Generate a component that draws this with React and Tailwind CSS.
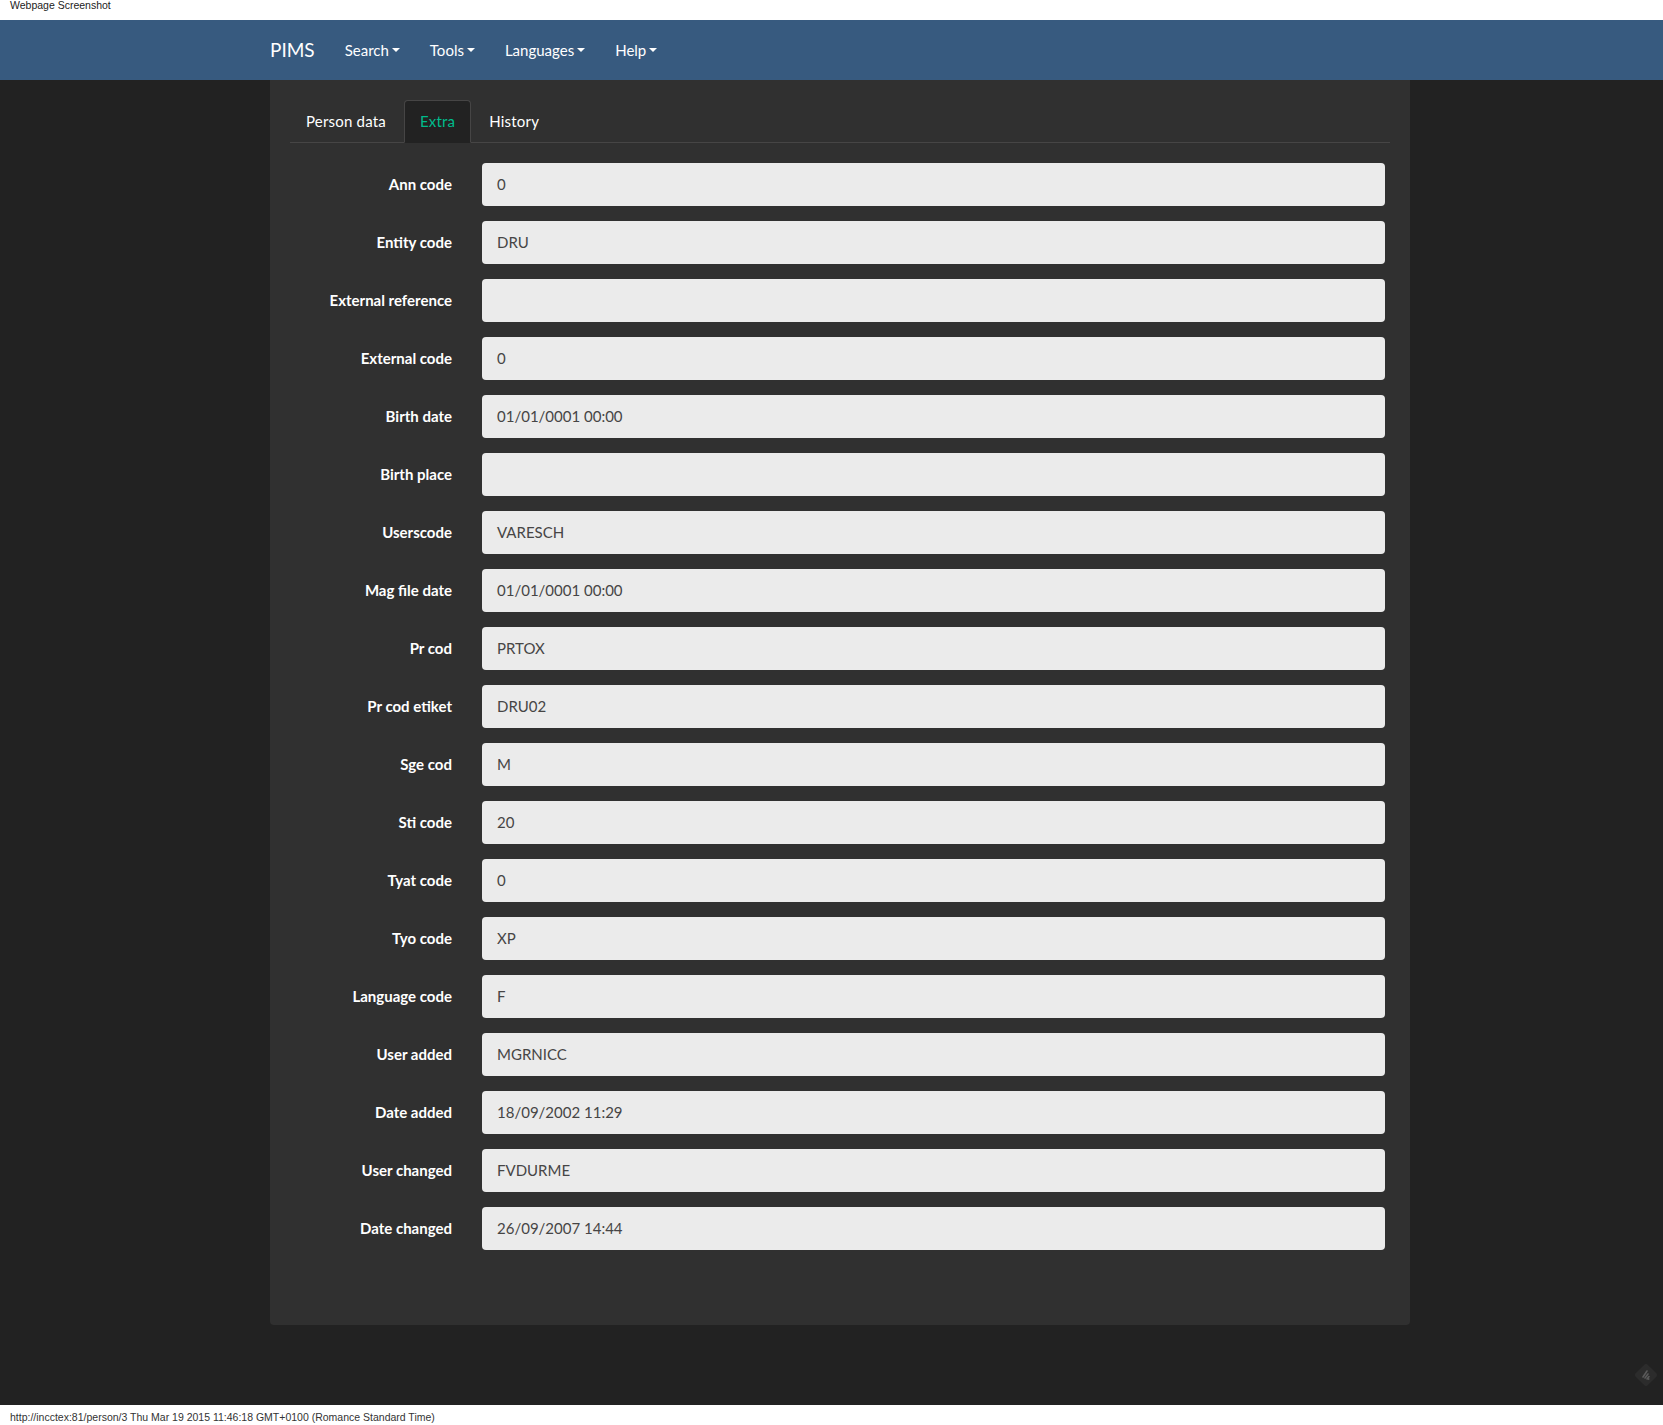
import React from "react";

const fields = [
  ["Ann code", "0"],
  ["Entity code", "DRU"],
  ["External reference", ""],
  ["External code", "0"],
  ["Birth date", "01/01/0001 00:00"],
  ["Birth place", ""],
  ["Userscode", "VARESCH"],
  ["Mag file date", "01/01/0001 00:00"],
  ["Pr cod", "PRTOX"],
  ["Pr cod etiket", "DRU02"],
  ["Sge cod", "M"],
  ["Sti code", "20"],
  ["Tyat code", "0"],
  ["Tyo code", "XP"],
  ["Language code", "F"],
  ["User added", "MGRNICC"],
  ["Date added", "18/09/2002 11:29"],
  ["User changed", "FVDURME"],
  ["Date changed", "26/09/2007 14:44"],
];

const menus = ["Search", "Tools", "Languages", "Help"];

const Caret = () => (
  <span className="inline-block ml-[3px] w-0 h-0 border-t-[4px] border-t-white border-x-[4px] border-x-transparent align-middle"></span>
);

const App = () => {
  return (
    <div className="w-[1663px] h-[1425px] flex flex-col font-['Lato','Noto_Sans',sans-serif] overflow-hidden">
      <div className="h-[20px] bg-white px-[10px] text-[10.5px] leading-[11px] text-[#222] font-['Liberation_Sans',Arial,sans-serif]">
        Webpage Screenshot
      </div>

      <div className="relative flex-1 bg-[#222222] flex flex-col">
        {/* navbar */}
        <nav className="h-[60px] bg-[#375a7f] flex items-center pl-[255px] text-white">
          <span className="px-[15px] text-[19px] leading-[20px]">PIMS</span>
          {menus.map((m) => (
            <span key={m} className="px-[15px] text-[15px] leading-[20px] flex items-center">
              {m}
              <Caret />
            </span>
          ))}
        </nav>

        {/* panel */}
        <div className="ml-[270px] w-[1140px] h-[1245px] bg-[#303030] rounded-b-[4px] px-[20px] pt-[20px]">
          <div className="flex border-b border-[#464545] text-[15px] leading-[20px] tracking-[0.2px]">
            <div className="mr-[2px] px-[15px] py-[10px] text-white border border-transparent">Person data</div>
            <div className="mr-[2px] px-[15px] py-[10px] text-[#00bc8c] bg-[#222222] border border-[#464545] border-b-transparent rounded-t-[4px] -mb-px">
              Extra
            </div>
            <div className="mr-[2px] px-[15px] py-[10px] text-white border border-transparent">History</div>
          </div>

          <div className="pt-[20px] flex flex-col gap-[15px]">
            {fields.map(([label, value]) => (
              <div key={label} className="flex items-center">
                <label className="w-[162px] text-right text-white font-bold text-[15px] leading-[21px]">
                  {label}
                </label>
                <div className="ml-[30px] w-[903px] h-[43px] bg-[#ebebeb] rounded-[4px] flex items-center px-[15px] text-[15px] text-[#464545]">
                  {value}
                </div>
              </div>
            ))}
          </div>
        </div>

        {/* extension badge */}
        <div className="absolute left-[1633px] top-[1342px]">
          <svg width="26" height="26" viewBox="0 0 26 26">
            <rect x="4.5" y="4.5" width="17" height="17" transform="rotate(45 13 13)" fill="#2c2c2c" rx="2" />
            <path d="M10 15 L14 9 M12 16 L15 12 M14 17 L16 14.5" stroke="#5a5a5a" strokeWidth="1.6" strokeLinecap="round" />
            <circle cx="15.5" cy="17" r="1" fill="#5a5a5a" />
          </svg>
        </div>
      </div>

      <div className="h-[20px] bg-white px-[10px] pt-[7px] text-[10.5px] leading-[11px] text-[#333] font-['Liberation_Sans',Arial,sans-serif]">
        http://incctex:81/person/3 Thu Mar 19 2015 11:46:18 GMT+0100 (Romance Standard Time)
      </div>
    </div>
  );
};

export default App;
